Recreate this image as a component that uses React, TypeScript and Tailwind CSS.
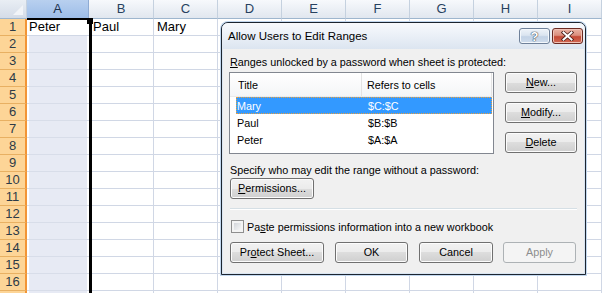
import React from 'react';

const ROWS = Array.from({ length: 17 }, (_, i) => i + 1);
const OTHER_COLS = ['D', 'E', 'F', 'G', 'H', 'I'];

function ColHead({ label }: { label: string }) {
  return (
    <div className="h-[19px] border-r border-b border-r-[#c5d1df] border-b-[#9eb6ce] bg-gradient-to-b from-[#f7f9fc] to-[#e1e7ef] flex items-center justify-center text-[13px] text-[#27415f]">
      {label}
    </div>
  );
}

function Cell({ children, className = '' }: { children?: React.ReactNode; className?: string }) {
  return (
    <div className={`h-[17px] border-r border-b border-[#d0d7e5] flex items-center text-[13px] text-black leading-[16px] whitespace-nowrap overflow-visible ${className}`}>
      {children}
    </div>
  );
}

function Sheet() {
  return (
    <div className="w-[603px] h-[293px] overflow-hidden bg-white relative font-['Liberation_Sans',Arial,sans-serif]">
      <div className="grid grid-cols-[27px_62px_65px_64px_64px_64px_64px_64px_64px_64px]">
        <div className="h-[19px] border-r border-b border-r-[#c5d1df] border-b-[#9eb6ce] bg-gradient-to-b from-[#e9eef4] to-[#d4dce8] flex items-end justify-end pr-[3px] pb-[3px]">
          <svg width="10" height="10" viewBox="0 0 10 10">
            <polygon points="10,0 10,10 0,10" fill="#f1f4f8" />
          </svg>
        </div>
        <div className="h-[19px] border-r border-b border-r-[#8eabd3] border-b-[#8eabd3] bg-gradient-to-b from-[#b8d0ef] to-[#9dbde8] flex items-center justify-center text-[13px] text-[#1d3350]">
          A
        </div>
        <ColHead label="B" />
        <ColHead label="C" />
        {OTHER_COLS.map((c) => (
          <ColHead key={c} label={c} />
        ))}
      </div>
      {ROWS.map((r) => (
        <div key={r} className="grid grid-cols-[27px_62px_65px_64px_64px_64px_64px_64px_64px_64px]">
          <div className="h-[17px] bg-[#fdd597] border-r-2 border-r-[#f29536] border-b border-b-[#e8b062] flex items-center justify-center text-[13px] text-[#2d3b47]">
            {r < 17 ? r : ''}
          </div>
          {r === 1 ? (
            <div className="h-[17px] border-b border-[#d0d7e5] bg-white flex items-center pl-[2px] text-[13px] text-black leading-[16px]">
              Peter
            </div>
          ) : (
            <div className="h-[17px] border-b border-[#d8dde9] bg-[#e7eaf4] shadow-[inset_2px_0_0_#ffffff,inset_-2px_0_0_#ffffff]" />
          )}
          <Cell className="pl-[4px]">{r === 1 ? 'Paul' : ''}</Cell>
          <Cell className="pl-[3px]">{r === 1 ? 'Mary' : ''}</Cell>
          {OTHER_COLS.map((c) => (
            <Cell key={c} />
          ))}
        </div>
      ))}
      {/* selection border overlay */}
      <div className="absolute left-[27px] top-[18px] w-[64px] h-[2px] bg-black" />
      <div className="absolute left-[89px] top-[18px] w-[3px] h-[276px] bg-black" />
      <div className="absolute left-[87px] top-[18px] w-[6px] h-[6px] bg-black" />
      <Dialog />
    </div>
  );
}

function Btn({ children, className = '', disabled = false }: { children: React.ReactNode; className?: string; disabled?: boolean }) {
  return (
    <div
      className={`h-[21px] shrink-0 flex items-center justify-center rounded-[3px] border text-[10.8px] leading-[13px] ${
        disabled
          ? 'border-[#adb2b5] bg-[#f4f4f4] text-[#8d8d8d]'
          : 'border-[#707070] bg-[linear-gradient(to_bottom,#f2f2f2_0%,#ebebeb_50%,#dddddd_50%,#cfcfcf_100%)] shadow-[inset_0_0_0_1px_#fcfcfc] text-black'
      } ${className}`}
    >
      {children}
    </div>
  );
}

function Dialog() {
  return (
    <div className="absolute left-[221px] top-[22px] w-[365px] h-[253px] rounded-t-[7px] border border-[#1c2530] bg-[#d9e5f2] shadow-[0_0_0_1px_#c2d7ee] flex flex-col font-['Liberation_Sans',Arial,sans-serif] text-black">
      <div className="h-[26px] shrink-0 flex items-center pl-[6px] pr-[2px] rounded-t-[6px] bg-gradient-to-b from-[#f8fafd] to-[#dce5f0]">
        <span className="text-[11.5px] leading-[14px]">Allow Users to Edit Ranges</span>
        <div className="ml-auto flex gap-[2px]">
          <div className="w-[31px] h-[16px] rounded-[3px] border border-[#6f819a] bg-[linear-gradient(to_bottom,#eef3f9_0%,#dbe5f0_45%,#c3d3e6_55%,#cfdcec_100%)] shadow-[inset_0_0_0_1px_#f4f8fc] flex items-center justify-center">
            <span className="text-[13px] font-bold leading-[13px] text-white [text-shadow:0_0_1px_#3d4a5c,0_0_1px_#3d4a5c,0_0_1px_#3d4a5c]">?</span>
          </div>
          <div className="w-[31px] h-[16px] rounded-[3px] border border-[#6b2a22] bg-[linear-gradient(to_bottom,#eab3a5_0%,#db8f7e_45%,#c54a36_55%,#d16a55_100%)] shadow-[inset_0_0_0_1px_#f0c2b6] flex items-center justify-center">
            <svg width="13" height="10" viewBox="0 0 13 10">
              <path d="M2.5 1.5 L10.5 8.5 M10.5 1.5 L2.5 8.5" stroke="#4a1d18" strokeWidth="3.6" strokeLinecap="square" />
              <path d="M2.5 1.5 L10.5 8.5 M10.5 1.5 L2.5 8.5" stroke="#ffffff" strokeWidth="2" strokeLinecap="square" />
            </svg>
          </div>
        </div>
      </div>
      <div className="flex-1 mx-[1px] mb-[1px] bg-[#f0f0f0] pl-[6px] pr-[7px] pt-[6px] flex flex-col text-[10.8px] leading-[14px]">
        <div className="pl-[1px]">
          <u>R</u>anges unlocked by a password when sheet is protected:
        </div>
        <div className="mt-[3px] flex justify-between">
          <div className="w-[265px] h-[82px] border border-[#828790] bg-white flex flex-col">
            <div className="h-[24px] shrink-0 flex bg-gradient-to-b from-white to-[#f4f5f7] border-b border-[#eaeaea]">
              <div className="w-[132px] border-r border-[#e3e3e3] flex items-center pl-[8px]">Title</div>
              <div className="w-[130px] border-r border-[#e3e3e3] flex items-center pl-[5px]">Refers to cells</div>
            </div>
            <div className="ml-[6px] w-[256px] h-[17px] bg-[#3399ff] text-white flex items-center outline outline-1 outline-dotted outline-[#e8a040] -outline-offset-1">
              <span className="w-[131px] pl-[1px]">Mary</span>
              <span className="pl-[1px]">$C:$C</span>
            </div>
            <div className="ml-[6px] w-[256px] h-[17px] flex items-center">
              <span className="w-[131px] pl-[1px]">Paul</span>
              <span className="pl-[1px]">$B:$B</span>
            </div>
            <div className="ml-[6px] w-[256px] h-[17px] flex items-center">
              <span className="w-[131px] pl-[1px]">Peter</span>
              <span className="pl-[1px]">$A:$A</span>
            </div>
          </div>
          <div className="w-[72px] flex flex-col gap-[9px]">
            <Btn className="w-[72px]">
              <span><u>N</u>ew...</span>
            </Btn>
            <Btn className="w-[72px]">
              <span><u>M</u>odify...</span>
            </Btn>
            <Btn className="w-[72px]">
              <span><u>D</u>elete</span>
            </Btn>
          </div>
        </div>
        <div className="mt-[9px] pl-[1px]">Specify who may edit the range without a password:</div>
        <div className="mt-[1px] pl-[1px] flex">
          <Btn className="w-[84px]">
            <span><u>P</u>ermissions...</span>
          </Btn>
        </div>
        <div className="mt-[9px] ml-[1px] h-[2px] border-t border-t-[#d5dfe5] border-b border-b-white" />
        <div className="mt-[10px] flex items-center h-[13px]">
          <div className="ml-[2px] w-[13px] h-[13px] border border-[#8f8f8f] bg-[#f4f4f4] p-[2px]">
            <div className="w-full h-full bg-gradient-to-br from-[#d3d6db] to-[#f7f7f7]" />
          </div>
          <span className="ml-[3px]">
            Pa<u>s</u>te permissions information into a new workbook
          </span>
        </div>
        <div className="mt-[9px] flex">
          <Btn className="ml-[1px] w-[94px]">
            <span>Pr<u>o</u>tect Sheet...</span>
          </Btn>
          <Btn className="ml-[11px] w-[73px]">OK</Btn>
          <Btn className="ml-[11px] w-[74px]">Cancel</Btn>
          <Btn className="ml-[10px] w-[73px]" disabled>
            Apply
          </Btn>
        </div>
      </div>
    </div>
  );
}

export default function App() {
  return <Sheet />;
}
